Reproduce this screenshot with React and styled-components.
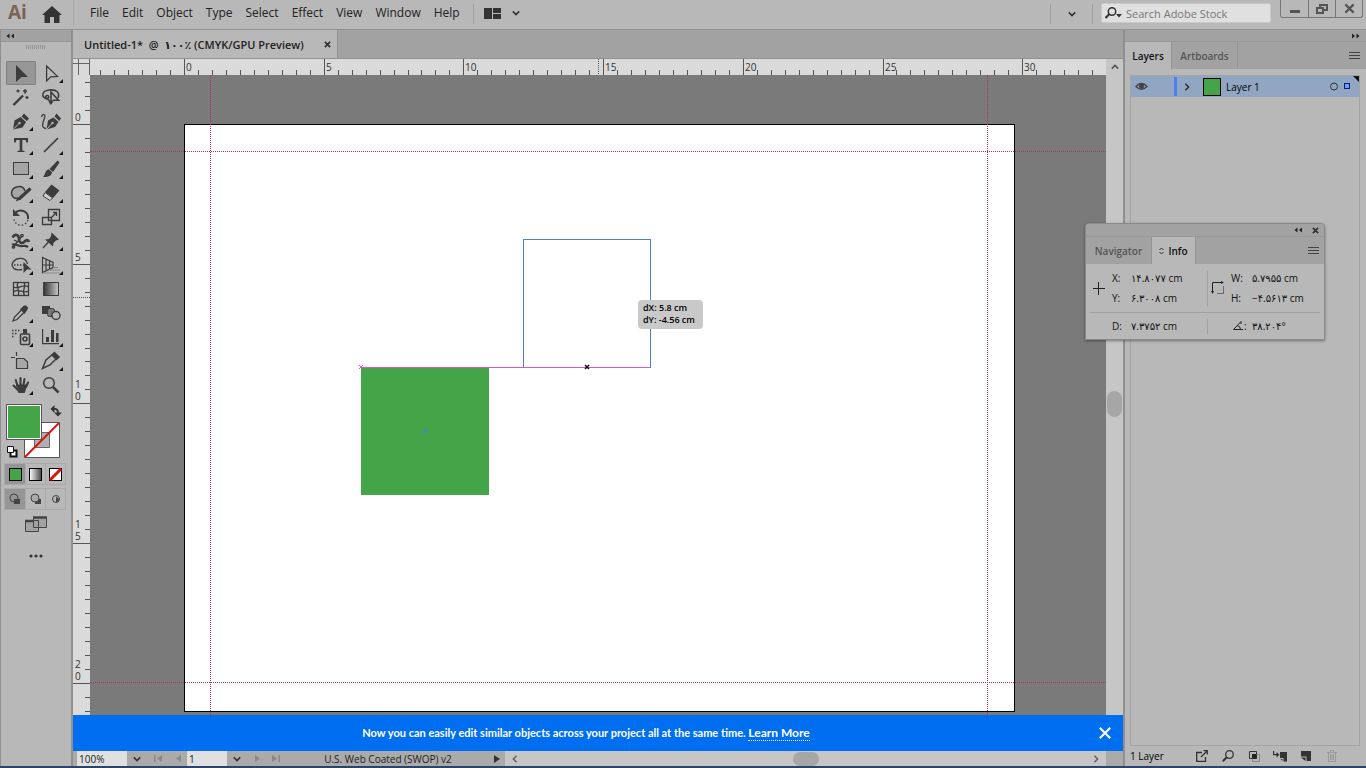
import React from "react";
import styled, { createGlobalStyle, css } from "styled-components";

const GlobalStyle = createGlobalStyle`
  * {
    box-sizing: border-box;
  }

  body {
    margin: 0;
    background: #b8b8b8;
    color: #222;
    font-family: "Open Sans", "DejaVu Sans", sans-serif;
    font-size: 12px;
    overflow: hidden;
  }

  button, input, select {
    font: inherit;
    color: inherit;
    border: 0;
    border-radius: 0;
    margin: 0;
    padding: 0;
    background: none;
  }

  svg {
    display: block;
    flex: none;
  }
`;

const Shell = styled.div`
  display: flex;
  flex-direction: column;
  height: 100vh;
  border-bottom: 2px solid #2c4468;
`;

const TopBar = styled.header`
  display: flex;
  align-items: flex-start;
  height: 30px;
  flex: none;
  border-bottom: 1px solid #929292;
`;

const Logo = styled.h1`
  width: 36px;
  margin: 0;
  padding-left: 8px;
  font: 700 19px/25px "Open Sans", sans-serif;
  color: #7b6355;
`;

const IconButton = styled.button`
  display: flex;
  align-items: center;
  justify-content: center;
  width: ${(p) => p.$w || 20}px;
  height: ${(p) => p.$h || 20}px;
  flex: none;
  color: ${(p) => p.$color || "#333"};
`;

const Divider = styled.span`
  width: 1px;
  height: 20px;
  margin-top: 4px;
  background: #a0a0a0;
`;

const Menu = styled.nav`
  display: flex;
  gap: 13px;
  padding: 0 13px 0 16px;
  margin-left: 5px;
  border-left: 1px solid #a9a9a9;
`;

const MenuItem = styled.button`
  font-size: 12px;
  line-height: 26px;
`;

const Spacer = styled.div`
  flex: ${(p) => p.$grow || 1};
`;

const Search = styled.label`
  display: flex;
  align-items: center;
  width: 170px;
  height: 20px;
  margin: 3px 9px 0 8px;
  padding-left: 3px;
  background: #e0e0e0;
  border: 1px solid #c8c8c8;
  border-radius: 2px;

  input {
    flex: 1;
    min-width: 0;
    padding-left: 4px;
    font-size: 11px;
    outline: none;
  }

  input::placeholder {
    color: #777;
    opacity: 1;
  }
`;

const WindowButtons = styled.div`
  display: flex;
  height: 18px;
  border: 1px solid #777;
  border-top: 0;
  border-radius: 0 0 3px 3px;
  margin-right: 3px;

  button + button {
    border-left: 1px solid #777;
  }
`;

const Workspace = styled.div`
  display: flex;
  flex: 1;
  min-height: 0;
`;

const DockHeader = styled.div`
  display: flex;
  align-items: center;
  justify-content: ${(p) => (p.$end ? "flex-end" : "flex-start")};
  height: 12px;
  flex: none;
  padding: 0 6px 0 5px;
  background: #a2a2a2;
  border-bottom: 1px solid #989898;
`;

const Toolbar = styled.aside`
  display: flex;
  flex-direction: column;
  width: 73px;
  flex: none;
  border-right: 2px solid #8f8f8f;
  border-left: 1px solid #8f8f8f;
`;

const Gripper = styled.div`
  width: 20px;
  height: 4px;
  margin: 3px 0 12px 25px;
  background: repeating-linear-gradient(90deg, #959595 0 1px, transparent 1px 2px);
`;

const ToolGrid = styled.div`
  display: grid;
  grid-template-columns: 30px 30px;
  grid-auto-rows: 24px;
  padding-left: 5px;
`;

const ToolButton = styled.button`
  display: block;
  color: #3c3c3c;
  ${(p) =>
    p.$active &&
    css`
      background: #969696;
      border-radius: 2px;
      box-shadow: inset 0 0 0 1px #808080;
    `}
`;

const SwatchArea = styled.div`
  padding: 7px 0 0 3px;
`;

const ModeRow = styled.div`
  display: flex;
  width: 60px;
  height: 20px;
  margin: ${(p) => p.$top}px 0 0 4px;
  box-shadow: 0 0 0 1px #a9a9a9;
`;

const ModeButton = styled.button`
  display: flex;
  align-items: center;
  justify-content: center;
  width: 20px;
  background: ${(p) => (p.$active ? "#969696" : "transparent")};
  color: #444;

  & + & {
    border-left: 1px solid #a9a9a9;
  }
`;

const Document = styled.main`
  display: flex;
  flex-direction: column;
  flex: 1;
  min-width: 0;
`;

const TabStrip = styled.div`
  display: flex;
  height: 29px;
  flex: none;
  background: #a2a2a2;
  border-bottom: 1px solid #929292;
`;

const DocumentTab = styled.div`
  display: flex;
  align-items: center;
  justify-content: space-between;
  width: 265px;
  padding: 0 4px 0 11px;
  background: #b8b8b8;
  border-right: 1px solid #929292;
  font-size: 11px;
  font-weight: 600;
  white-space: pre;
`;

const Stage = styled.div`
  display: grid;
  grid-template-columns: 17px minmax(0, 1fr) 17px;
  grid-template-rows: 16px minmax(0, 1fr);
  flex: 1;
  min-height: 0;
`;

const RulerBox = styled.div`
  overflow: hidden;
  background: #dadada;

  text {
    font-size: 10px;
    fill: #333;
  }
`;

const Canvas = styled.div`
  position: relative;
  overflow: hidden;
  background: #7a7a7a;
`;

const Artboard = styled.div`
  position: absolute;
  left: 94px;
  top: 49px;
  width: 831px;
  height: 588px;
  background: #fff;
  border: 1px solid #000;
`;

const Guide = styled.div`
  position: absolute;
  ${(p) =>
    p.$vertical
      ? css`
          left: ${p.$at}px;
          top: 0;
          bottom: 0;
          border-left: 1px dotted #b02c6c;
        `
      : css`
          top: ${p.$at}px;
          left: 0;
          right: 0;
          border-top: 1px dotted #b02c6c;
        `}
`;

const GreenSquare = styled.div`
  position: absolute;
  left: 271px;
  top: 292px;
  width: 128px;
  height: 128px;
  background: #43a547;
`;

const DragOutline = styled.div`
  position: absolute;
  left: 433px;
  top: 164px;
  width: 128px;
  height: 129px;
  border: 1px solid #4d80c4;
`;

const SmartGuide = styled.div`
  position: absolute;
  left: 271px;
  top: 292px;
  width: 289px;
  height: 1px;
  background: #d858cc;
`;

const Marker = styled.svg`
  position: absolute;
  left: ${(p) => p.$x - 3}px;
  top: ${(p) => p.$y - 3}px;
`;

const Measure = styled.output`
  position: absolute;
  left: 548px;
  top: 225px;
  width: 65px;
  height: 29px;
  padding: 2px 5px;
  background: #c9c9c9;
  border-radius: 4px;
  color: #000;
  font: 600 9px/12px "Open Sans", sans-serif;
  white-space: pre;
`;

const VScroll = styled.div`
  grid-column: 3;
  grid-row: 1 / 3;
  display: flex;
  flex-direction: column;
  align-items: center;
  background: #c6c6c6;
`;

const Thumb = styled.div`
  width: ${(p) => p.$w}px;
  height: ${(p) => p.$h}px;
  background: #a6a6a6;
  border-radius: 8px;
  flex: none;
`;

const Banner = styled.div`
  display: flex;
  align-items: center;
  height: 36px;
  flex: none;
  padding-right: 10px;
  background: #006ef0;
  color: #fff;
  font: 700 11px/16px Lato, "Open Sans", sans-serif;

  p {
    flex: 1;
    margin: 0;
    padding-left: 2px;
    text-align: center;
  }

  a {
    color: #fff;
    font-size: 12px;
    text-decoration: none;
    border-bottom: 1px dotted #fff;
  }
`;

const StatusBar = styled.div`
  display: flex;
  align-items: stretch;
  height: 15px;
  flex: none;
  padding-left: 4px;
  background: #aaa;
  font-size: 10px;
  line-height: 17px;
`;

const StatusInput = styled.input`
  width: ${(p) => p.$w}px;
  padding: 2px 0 0 2px;
  background: #e0e0e0;
`;

const Profile = styled.span`
  flex: none;
  width: 206px;
  padding-left: 4px;
  text-align: center;
`;

const HScroll = styled.div`
  display: flex;
  flex: 1;
  align-items: center;
  justify-content: space-between;
  background: #c6c6c6;
`;

const Corner = styled.div`
  width: 17px;
`;

const Dock = styled.aside`
  display: flex;
  flex-direction: column;
  width: 243px;
  flex: none;
  border-left: 2px solid #8f8f8f;
`;

const PanelTabs = styled.div`
  display: flex;
  align-items: center;
  height: 27px;
  flex: none;
  background: #a2a2a2;
`;

const PanelTab = styled.button`
  display: flex;
  align-items: center;
  justify-content: center;
  gap: 4px;
  width: ${(p) => p.$w}px;
  height: 27px;
  font-size: 10px;
  font-weight: 600;
  color: ${(p) => (p.$active ? "#111" : "#555")};
  background: ${(p) => (p.$active ? "#b8b8b8" : "transparent")};
  border-right: 1px solid #949494;
`;

const LayerList = styled.div`
  flex: 1;
  margin: 6px 6px 0 5px;
  border: 1px solid #a4a4a4;
`;

const LayerRow = styled.div`
  display: flex;
  align-items: center;
  height: 21px;
  background: #90a6c3;
  font-size: 10px;
  color: #000;
`;

const LayerStripe = styled.span`
  width: 3px;
  height: 19px;
  margin-left: 23px;
  background: #4c7ff0;
`;

const LayerThumb = styled.span`
  width: 18px;
  height: 18px;
  margin: 0 5px 0 6px;
  background: #43a547;
  border: 1px solid #000;
`;

const LayerFooter = styled.footer`
  display: flex;
  align-items: center;
  height: 20px;
  flex: none;
  padding: 0 24px 0 5px;
  gap: 6px;
  font-size: 10px;
  color: #000;

  span {
    flex: 1;
  }
`;

const InfoWindow = styled.section`
  position: absolute;
  left: calc(100vw - 281px);
  top: 223px;
  width: 240px;
  background: #b8b8b8;
  border: 1px solid #8a8a8a;
  border-radius: 4px 4px 0 0;
  box-shadow: 0 1px 3px rgba(0, 0, 0, 0.4);
  overflow: hidden;
`;

const InfoHeader = styled.div`
  display: flex;
  align-items: center;
  justify-content: flex-end;
  gap: 8px;
  height: 13px;
  padding-right: 4px;
  background: #a2a2a2;
  border-bottom: 1px solid #989898;
`;

const InfoRow = styled.div`
  display: grid;
  grid-template-columns: 26px 96px 23px 88px;
  align-items: center;
  height: ${(p) => p.$h}px;

  & + & {
    margin: 0 4px;
    grid-template-columns: 22px 96px 23px 84px;
    border-top: 1px solid #a0a0a0;
  }
`;

const Readings = styled.dl`
  display: grid;
  grid-template-columns: ${(p) => (p.$ruled ? 19 : 21)}px auto;
  row-gap: 5px;
  margin: 0;
  font-size: 10px;
  line-height: 15px;
  color: #111;
  white-space: nowrap;
  ${(p) => p.$ruled && "border-right: 1px solid #a0a0a0;"}

  dt,
  dd {
    margin: 0;
  }

  dt {
    display: flex;
    align-items: center;
  }
`;

const InfoIcon = styled.div`
  display: flex;
  justify-content: center;
`;

const Chevron = ({ dir = "down", size = 8 }) => {
  const turn = { down: 0, left: 90, up: 180, right: 270 }[dir];
  return (
    <svg width={size} height={size} viewBox="0 0 8 8" fill="none" stroke="currentColor" strokeWidth="1.6">
      <path d="M.8 2.4 4 5.6 7.2 2.4" transform={`rotate(${turn} 4 4)`} />
    </svg>
  );
};

const DoubleArrow = ({ right }) => (
  <svg width="8" height="6" viewBox="0 0 8 6" fill="#222">
    <path d={right ? "M0 .5 3 3 0 5.5ZM4.500.5 7.500 3 4.500 5.5Z" : "M3.500.5.5 3 3.500 5.5ZM8 .5 5 3 8 5.5Z"} />
  </svg>
);

const Cross = ({ size = 7, width = 2 }) => (
  <svg width={size} height={size} viewBox="0 0 8 8" stroke="currentColor" strokeWidth={width}>
    <path d="M1 1 7 7M7 1 1 7" />
  </svg>
);

const Burger = () => (
  <svg width="11" height="8" viewBox="0 0 11 8" stroke="#444" shapeRendering="crispEdges">
    <path d="M0 .5H11M0 3.5H11M0 6.5H11" />
  </svg>
);

const line = { fill: "none", stroke: "currentColor", strokeWidth: 1.3 };

// every glyph is drawn on a 30x24 cell
const tools = [
  ["Selection", <path d="M10 4 22 16 15.5 16 10 21Z" fill="currentColor" />],
  ["Direct Selection", <path d="M10.6 5 21.5 15.4 14.8 15.8 10.6 20Z" {...line} />, true],
  [
    "Magic Wand",
    <g {...line}>
      <path d="M7.5 20 17 10.5" strokeWidth="2.4" />
      <path d="M19 4v4M17 6h4M12 4.500v3M10.500 6h3M21 11v3M19.500 12.500h3M18.500 8.500 20 7" />
    </g>,
  ],
  [
    "Lasso",
    <g {...line} strokeWidth="1.6">
      <path d="M11.500 13C5 14 5 6 13 5c8-1 11 3 9 8" />
      <path d="M11.500 13c2 .5 1.500-3-.5-2.500s-1.500 4 1 4 0 4 4 4" />
      <path d="M15 7V18L17.500 15.200H22.500Z" fill="#b8b8b8" />
    </g>,
  ],
  [
    "Pen",
    <g>
      <path d="M7 20.500 8.500 11.500 14.500 8 20 13 16.500 18.500Z M15.500 7.500 18 4.500 23 9.500 20.800 12Z" fill="currentColor" />
      <path d="M7 20.500 13 14.500" stroke="#b8b8b8" />
      <circle cx="13.500" cy="14" r="1.200" fill="#b8b8b8" />
    </g>,
    true,
  ],
  [
    "Curvature",
    <g>
      <path d="M10.500 20.500 12 11.500 17.500 8.500 22.500 13 19 18Z M18.500 7.500 20.500 4.500 25 9.500 23.300 12Z" fill="currentColor" />
      <path d="M5.500 8c1-4 4.500-3 3 1s-4 10 1.500 10.500" {...line} />
      <path d="M10.500 20.500 16 14.500" stroke="#b8b8b8" />
      <circle cx="16.500" cy="14" r="1.200" fill="#b8b8b8" />
    </g>,
  ],
  ["Type", <path d="M8 5H22V9.500H20.500L19.500 7H16.300V17.500L18.500 18V19H11.500V18L13.700 17.500V7H10.500L9.500 9.500H8Z" fill="currentColor" />, true],
  ["Line Segment", <path d="M8 19 22 5" {...line} strokeWidth="1.7" />, true],
  ["Rectangle", <rect x="7.500" y="5.500" width="15" height="12" fill="#a5a5a5" stroke="currentColor" />, true],
  [
    "Paintbrush",
    <g fill="currentColor">
      <path d="M21.500 3.500 23.500 5.500 17 15 13.500 12Z" />
      <path d="M12.800 12.300 16 15.300C15.500 20 11 20 7 20 9.500 18 9 13 12.800 12.300Z" />
    </g>,
    true,
  ],
  [
    "Shaper",
    <g {...line}>
      <path d="M19 10C17 3 6 5 5.500 12c0 4 3 6 7 5.500" fill="#a5a5a5" strokeWidth="1.5" />
      <path d="M13 18 24.500 7.500" strokeWidth="3.200" />
      <path d="M10 20.500 11.500 16 14.500 18.500Z" fill="currentColor" stroke="none" />
    </g>,
    true,
  ],
  [
    "Eraser",
    <g>
      <path d="M15.500 3.500 23.500 9.500 17 17 9 11Z" fill="currentColor" />
      <path d="M9 11.500 16.500 17 14 19.500 7 15Z" fill="#d0d0d0" stroke="currentColor" />
    </g>,
    true,
  ],
  [
    "Rotate",
    <g {...line}>
      <path d="M9 8C14 3 23 6 22 14" strokeWidth="2" />
      <path d="M22 15C20 22 9 22 8 14" strokeDasharray="1.500 2" />
      <path d="M7 4V11H14Z" fill="currentColor" stroke="none" />
    </g>,
    true,
  ],
  [
    "Scale",
    <g {...line}>
      <path d="M12.500 4.500H23.500V15.500H12.500ZM6.500 12.500H15.500V19.500H6.500Z" />
      <path d="M16 12 20.500 7.500M17 7.500H20.500V11" />
    </g>,
    true,
  ],
  [
    "Width",
    <g {...line}>
      <path d="M6.500 8.500C9 4 13 6 13 10s3 5 5 3 4-3 5 0" strokeWidth="2.600" />
      <path d="M6 15.500c3-1 5 1 8 1.500s5-1 8 1" strokeWidth="2.200" />
      <path d="M7 18.500 16 7M8 11 12 13" />
      <circle cx="7.500" cy="18" r="1.200" />
      <circle cx="16" cy="6.500" r="1.200" />
    </g>,
    true,
  ],
  [
    "Puppet Warp",
    <g fill="currentColor">
      <path d="M15.500 3.500 23 10.500 20 11.500 17.500 14 17 17.500 9 10.500 13 10 15 7.500Z" />
      <path d="M12.500 13 7 19" {...line} />
    </g>,
    true,
  ],
  [
    "Shape Builder",
    <g>
      <path d="M16 16.500C8 18.500 4 13 7.500 8.500S20 4 21.500 11" {...line} />
      <path d="M8 12H18" {...line} strokeDasharray="1.500 1.500" />
      <path d="M17.500 9 25.500 16.500H21L17.500 20Z" fill="currentColor" />
    </g>,
    true,
  ],
  [
    "Perspective Grid",
    <g {...line} strokeWidth="1.200">
      <path d="M6.500 4.500V19.500L17 14.500V9.500ZM10 6V18M13.500 8V16M6.500 12H17" />
      <path d="M17 14.500H22M13 17H24M7 20H24" stroke="#888" />
    </g>,
    true,
  ],
  [
    "Mesh",
    <g {...line}>
      <rect x="7.500" y="5.500" width="15" height="13" />
      <path d="M7.500 10C12 13 17 6 22.500 10M7.500 15C12 11 17 17 22.500 14M12 5.500C9 10 15 14 12 18.500M18 5.500C21 10 15 13 18.500 18.500" />
    </g>,
  ],
  [
    "Gradient",
    <g>
      <defs>
        <linearGradient id="toolGradient">
          <stop offset="0" stopColor="#333" />
          <stop offset="1" stopColor="#c8c8c8" />
        </linearGradient>
      </defs>
      <rect x="7.500" y="5.500" width="15" height="13" fill="url(#toolGradient)" stroke="currentColor" />
    </g>,
  ],
  [
    "Eyedropper",
    <g>
      <path d="M7 20 8.500 16 16 8.500 18.500 11 11 18.500Z" {...line} />
      <path d="M14 8 16 6.500C19 2 24 6 21 9.500L19.500 11.500 18.500 13Z" fill="currentColor" />
    </g>,
    true,
  ],
  [
    "Blend",
    <g stroke="currentColor">
      <rect x="6.500" y="5.500" width="7" height="7" fill="#3c3c3c" />
      <rect x="11.500" y="7.500" width="7" height="8" rx="2" fill="#777" />
      <circle cx="20" cy="14.500" r="4" fill="#b8b8b8" strokeWidth="1.400" />
    </g>,
  ],
  [
    "Symbol Sprayer",
    <g {...line}>
      <path d="M6 5.500H14M6 8.500H12M6 11.500H9" strokeDasharray="1.500 1.500" strokeWidth="1.600" />
      <rect x="14.500" y="9" width="9" height="10.500" rx="1" strokeWidth="1.600" />
      <circle cx="19" cy="14" r="2" strokeWidth="1.600" />
      <path d="M17 4H21V8.500H17Z" fill="currentColor" stroke="none" />
    </g>,
    true,
  ],
  [
    "Column Graph",
    <g fill="currentColor">
      <path d="M6 4H7.200V18H23V19.200H6ZM10 12H13V17H10ZM15 5H18V17H15ZM20 8H22.500V17H20Z" />
    </g>,
    true,
  ],
  [
    "Artboard",
    <g {...line} strokeWidth="1.200">
      <path d="M10.500 9.500H18L21.500 13V19.500H10.500Z" fill="#a8a8a8" />
      <path d="M5 8.500H9M10.500 3V7" />
    </g>,
  ],
  [
    "Slice",
    <g {...line} strokeWidth="1.500">
      <path d="M6.500 19.500 10 11 16.500 5.500 20.500 9.500 14 16Z" />
      <path d="M16 6 18.500 3.500 23 8 20.500 10.500Z" fill="currentColor" />
    </g>,
    true,
  ],
  [
    "Hand",
    <g fill="none" stroke="currentColor" strokeWidth="2.100" strokeLinecap="round">
      <path d="M11.500 13 9.800 7M14.500 12V5M17.500 12 18.500 6M20 14 22 9.500M12 17 7.500 12.500" />
      <path d="M11 12H20.500L18.500 19.500H13Z" fill="currentColor" strokeWidth="1" />
    </g>,
    true,
  ],
  [
    "Zoom",
    <g {...line}>
      <circle cx="13" cy="10" r="5.300" strokeWidth="1.500" />
      <path d="M17 14 22.500 19.500" strokeWidth="2.500" />
    </g>,
  ],
];

const UNIT = 27.94;
const halfUnits = (from, to) => Array.from({ length: to - from }, (_, i) => i + from);

const TopRuler = () => (
  <RulerBox>
    <svg width="1016" height="16" stroke="#555" shapeRendering="crispEdges">
      {halfUnits(-6, 67).map((n) => {
        const x = Math.round(94 + (n * UNIT) / 2) + 0.5;
        return <path key={n} d={`M${x} ${n % 10 === 0 ? 0 : 11}V16`} />;
      })}
      <path d="M508.500 0V16" strokeDasharray="1 1" />
      {[0, 5, 10, 15, 20, 25, 30].map((n) => (
        <text key={n} x={96 + Math.round(n * UNIT)} y="12" stroke="none">
          {n}
        </text>
      ))}
    </svg>
  </RulerBox>
);

const SideRuler = () => (
  <RulerBox>
    <svg width="17" height="640" stroke="#555" shapeRendering="crispEdges">
      {halfUnits(-3, 43).map((n) => {
        const y = Math.round(49 + (n * UNIT) / 2) + 0.5;
        return <path key={n} d={`M${n % 10 === 0 ? 0 : 12} ${y}H17`} />;
      })}
      <path d="M0 222.500H17" strokeDasharray="1 1" />
      {[0, 5, 10, 15, 20].map((n) =>
        String(n)
          .split("")
          .reverse()
          .map((digit, i) => (
            <text key={`${n}-${i}`} x="2" y={46 + Math.round(n * UNIT) - i * 12} stroke="none">
              {digit}
            </text>
          ))
      )}
    </svg>
  </RulerBox>
);

const Header = () => (
  <TopBar>
    <Logo>Ai</Logo>
    <IconButton $w={32} $h={28} aria-label="Home">
      <svg width="20" height="17" viewBox="0 0 20 17" fill="#333">
        <path d="M10 0 20 9H17.500V17H12V11H8V17H2.500V9H0Z" />
      </svg>
    </IconButton>
    <Menu>
      {["File", "Edit", "Object", "Type", "Select", "Effect", "View", "Window", "Help"].map((name) => (
        <MenuItem key={name}>{name}</MenuItem>
      ))}
    </Menu>
    <Divider />
    <IconButton $w={38} $h={26} aria-label="Arrange documents">
      <svg width="17" height="11" viewBox="0 0 17 11" fill="#333">
        <path d="M0 0H8V11H0ZM9 0H17V5H9ZM9 6H17V11H9Z" />
      </svg>
    </IconButton>
    <IconButton $w={8} $h={26} aria-label="Arrange options">
      <Chevron />
    </IconButton>
    <Spacer />
    <Divider />
    <IconButton $w={41} $h={28} aria-label="Workspace">
      <Chevron />
    </IconButton>
    <Divider />
    <Search>
      <svg width="17" height="12" viewBox="0 0 17 12" fill="none" stroke="#333" strokeWidth="1.500">
        <circle cx="7" cy="4.500" r="3.700" />
        <path d="M4.500 7 .5 11" strokeWidth="2" />
        <path d="M11 7H17L14 10.500Z" fill="#333" stroke="none" />
      </svg>
      <input type="text" placeholder="Search Adobe Stock" aria-label="Search Adobe Stock" />
    </Search>
    <WindowButtons>
      <IconButton $w={27} $h={17} aria-label="Minimize">
        <svg width="10" height="10" fill="#555">
          <path d="M0 6H10V9H0Z" />
        </svg>
      </IconButton>
      <IconButton $w={27} $h={17} aria-label="Restore">
        <svg width="12" height="10" fill="none" stroke="#555" strokeWidth="2">
          <path d="M4 3V1H11V6H8M1 4H7V9H1Z" />
        </svg>
      </IconButton>
      <IconButton $w={27} $h={17} $color="#555" aria-label="Close">
        <Cross size={11} width={1.6} />
      </IconButton>
    </WindowButtons>
  </TopBar>
);

const ToolPanel = () => (
  <Toolbar>
    <DockHeader>
      <DoubleArrow />
    </DockHeader>
    <Gripper />
    <ToolGrid>
      {tools.map(([name, glyph, more], i) => (
        <ToolButton key={name} $active={i === 0} aria-label={name}>
          <svg width="30" height="24">
            {glyph}
            {more && <path d="M27 18V22H23Z" fill="#111" />}
          </svg>
        </ToolButton>
      ))}
    </ToolGrid>
    <SwatchArea>
      <svg width="60" height="56" role="img" aria-label="Fill and stroke">
        <path d="M20.500 18.500H55.500V53.500H20.500Z" fill="#fff" stroke="#555" />
        <path d="M30.500 28.500H45.500V43.500H30.500Z" fill="#b0b0b0" stroke="#666" />
        <path d="M21 53 55 19" stroke="#e01010" strokeWidth="2" />
        <path d="M2.500.5H37.500V35.500H2.500Z" fill="#43a547" stroke="#555" />
        <path d="M3.500 1.500H36.500V34.500H3.500Z" fill="none" stroke="#fff" />
        <path d="M50 5Q54 4.500 54 9" fill="none" stroke="#333" strokeWidth="1.800" />
        <path d="M50.500 1V9L46.500 5ZM50 8.500H58L54 12.500Z" fill="#333" />
        <path d="M6.500 46.500H12.500V52.500H6.500Z" fill="#fff" stroke="#111" strokeWidth="2" />
        <path d="M3.500 42.500H9.500V48.500H3.500Z" fill="#fff" stroke="#111" />
      </svg>
    </SwatchArea>
    <ModeRow $top={4}>
      <ModeButton $active aria-label="Color">
        <svg width="13" height="13">
          <rect x=".5" y=".5" width="12" height="12" fill="#43a547" stroke="#000" />
        </svg>
      </ModeButton>
      <ModeButton aria-label="Gradient fill">
        <svg width="13" height="13">
          <defs>
            <linearGradient id="fillGradient">
              <stop offset="0" stopColor="#fff" />
              <stop offset="1" stopColor="#444" />
            </linearGradient>
          </defs>
          <rect x=".5" y=".5" width="12" height="12" fill="url(#fillGradient)" stroke="#000" />
        </svg>
      </ModeButton>
      <ModeButton aria-label="None">
        <svg width="13" height="13">
          <rect x=".5" y=".5" width="12" height="12" fill="#fff" stroke="#000" />
          <path d="M1 12 12 1" stroke="#e01010" strokeWidth="3" />
        </svg>
      </ModeButton>
    </ModeRow>
    <ModeRow $top={5}>
      <ModeButton $active aria-label="Draw normal">
        <svg width="12" height="12">
          <circle cx="5" cy="5" r="4" fill="none" stroke="currentColor" />
          <path d="M5 6H11V11H5Z" fill="currentColor" />
        </svg>
      </ModeButton>
      <ModeButton aria-label="Draw behind">
        <svg width="12" height="12">
          <path d="M5 6H11V11H5Z" fill="currentColor" />
          <circle cx="5" cy="5" r="4" fill="#aaa" stroke="currentColor" />
        </svg>
      </ModeButton>
      <ModeButton aria-label="Draw inside">
        <svg width="10" height="10">
          <circle cx="5" cy="5" r="3.500" fill="none" stroke="currentColor" />
          <path d="M5 5V2.500L8 5A3 3 0 0 1 5 8Z" fill="currentColor" />
        </svg>
      </ModeButton>
    </ModeRow>
    <IconButton $w={70} $h={30} aria-label="Change screen mode">
      <svg width="22" height="16" fill="#a2a2a2" stroke="#444">
        <path d="M.5 4.500H13.500V15.500H.5ZM8.500 1.500H21.500V11.500H8.500Z" />
        <path d="M0 5H8M8 1.500H22" strokeWidth="2.400" />
      </svg>
    </IconButton>
    <IconButton $w={70} $h={34} aria-label="Edit toolbar">
      <svg width="14" height="4" fill="#333">
        <circle cx="2" cy="2" r="1.600" />
        <circle cx="7" cy="2" r="1.600" />
        <circle cx="12" cy="2" r="1.600" />
      </svg>
    </IconButton>
  </Toolbar>
);

const DocumentView = () => (
  <Document>
    <TabStrip>
      <DocumentTab>
        <span>Untitled-1*  @  ۱۰۰٪ (CMYK/GPU Preview)</span>
        <IconButton $w={12} aria-label="Close document">
          <Cross />
        </IconButton>
      </DocumentTab>
    </TabStrip>
    <Stage>
      <RulerBox>
        <svg width="17" height="16" stroke="#666" shapeRendering="crispEdges">
          <path d="M0 4.500H17M5.500 0V16M16.500 0V16" />
        </svg>
      </RulerBox>
      <TopRuler />
      <VScroll>
        <IconButton $h={16} $color="#555" aria-label="Scroll up">
          <Chevron dir="up" />
        </IconButton>
        <Spacer $grow={18} />
        <Thumb $w={15} $h={26} />
        <Spacer $grow={17} />
      </VScroll>
      <SideRuler />
      <Canvas>
        <Artboard />
        <Guide $vertical $at={120} />
        <Guide $vertical $at={897} />
        <Guide $at={76} />
        <Guide $at={607} />
        <GreenSquare />
        <DragOutline />
        <SmartGuide />
        <Marker $x={271} $y={292} width="6" height="6" stroke="#e050d8">
          <path d="M1 1 5 5M5 1 1 5" />
        </Marker>
        <Marker $x={335} $y={356} width="6" height="6" stroke="#3f84e0">
          <path d="M1 1 5 5M5 1 1 5M3 1V5" />
        </Marker>
        <Marker $x={497} $y={292} width="6" height="6" stroke="#111" strokeWidth="1.500">
          <path d="M1 1 5 5M5 1 1 5" />
        </Marker>
        <Measure>{"dX: 5.8 cm\ndY: -4.56 cm"}</Measure>
      </Canvas>
    </Stage>
    <Banner>
      <p>
        Now you can easily edit similar objects across your project all at the same time. <a href="#learn">Learn More</a>
      </p>
      <IconButton $w={16} $color="#fff" aria-label="Dismiss">
        <Cross size={14} width={1.2} />
      </IconButton>
    </Banner>
    <StatusBar>
      <StatusInput $w={50} defaultValue="100%" aria-label="Zoom level" />
      <IconButton $h={15} aria-label="Zoom presets">
        <Chevron />
      </IconButton>
      <IconButton $w={22} $h={15} $color="#888" aria-label="First artboard">
        <svg width="9" height="7" fill="currentColor">
          <path d="M0 0H1.500V7H0ZM8 0V7L3 3.500Z" />
        </svg>
      </IconButton>
      <IconButton $w={18} $h={15} $color="#888" aria-label="Previous artboard">
        <svg width="5" height="7" fill="currentColor">
          <path d="M5 0V7L0 3.500Z" />
        </svg>
      </IconButton>
      <StatusInput $w={40} defaultValue="1" aria-label="Artboard number" />
      <IconButton $h={15} aria-label="Artboard list">
        <Chevron />
      </IconButton>
      <IconButton $w={20} $h={15} $color="#888" aria-label="Next artboard">
        <svg width="5" height="7" fill="currentColor">
          <path d="M0 0V7L5 3.500Z" />
        </svg>
      </IconButton>
      <IconButton $w={16} $h={15} $color="#888" aria-label="Last artboard">
        <svg width="9" height="7" fill="currentColor">
          <path d="M7.500 0H9V7H7.500ZM1 0V7L6 3.500Z" />
        </svg>
      </IconButton>
      <Profile>U.S. Web Coated (SWOP) v2</Profile>
      <IconButton $w={16} $h={15} aria-label="Status options">
        <svg width="6" height="8" fill="currentColor">
          <path d="M0 0V8L6 4Z" />
        </svg>
      </IconButton>
      <HScroll>
        <IconButton $h={15} $color="#666" aria-label="Scroll left">
          <Chevron dir="left" />
        </IconButton>
        <Thumb $w={26} $h={14} />
        <IconButton $h={15} $color="#666" aria-label="Scroll right">
          <Chevron dir="right" />
        </IconButton>
      </HScroll>
      <Corner />
    </StatusBar>
  </Document>
);

const LayersPanel = () => (
  <Dock>
    <DockHeader $end>
      <DoubleArrow right />
    </DockHeader>
    <PanelTabs>
      <PanelTab $active $w={47}>Layers</PanelTab>
      <PanelTab $w={66}>Artboards</PanelTab>
      <Spacer />
      <IconButton $w={24} aria-label="Panel menu">
        <Burger />
      </IconButton>
    </PanelTabs>
    <LayerList>
      <LayerRow>
        <IconButton aria-label="Toggle visibility">
          <svg width="13" height="9" viewBox="0 0 13 9">
            <path d="M1 4.500Q6.500-1.500 12 4.500 6.500 10 1 4.500Z" fill="none" stroke="#444" strokeWidth="1.400" />
            <circle cx="6.500" cy="4.300" r="2.500" fill="#444" />
          </svg>
        </IconButton>
        <LayerStripe />
        <IconButton aria-label="Expand layer">
          <Chevron dir="right" />
        </IconButton>
        <LayerThumb />
        <span>Layer 1</span>
        <Spacer />
        <svg width="32" height="21">
          <circle cx="7" cy="10.500" r="3.500" fill="none" stroke="#333" />
          <rect x="17.500" y="7.500" width="5" height="5" fill="#6a9cf8" stroke="#102070" />
          <path d="M26 0H32V6Z" fill="#111" />
        </svg>
      </LayerRow>
    </LayerList>
    <LayerFooter>
      <span>1 Layer</span>
      <IconButton aria-label="Collect for export">
        <svg width="12" height="12" {...line} stroke="#333">
          <path d="M6 2.500H.7V11.300H9.500V7M5 7 11 1M7.500.7H11.300V4.500" />
        </svg>
      </IconButton>
      <IconButton aria-label="Locate object">
        <svg width="12" height="12" {...line} stroke="#333">
          <circle cx="7.500" cy="4.500" r="3.800" />
          <path d="M4.800 7.200.8 11.200" strokeWidth="2" />
        </svg>
      </IconButton>
      <IconButton aria-label="Make clipping mask">
        <svg width="11" height="11" fill="none" stroke="#333">
          <path d="M.5.5H7.500V7.500H.5Z" />
          <path d="M3.500 3.500H10.500V10.500H3.500Z" stroke="#888" />
          <path d="M3 3H7.500V7.500H3Z" fill="#222" stroke="none" />
        </svg>
      </IconButton>
      <IconButton aria-label="New sublayer">
        <svg width="14" height="11" fill="#333">
          <path d="M7 1H14V10.500H10.500V7H7ZM7.500 8H9.500V10ZM0 0H1.200V3H3.500V1L6.500 3.700 3.500 6.500V4.300H0Z" />
        </svg>
      </IconButton>
      <IconButton aria-label="New layer">
        <svg width="10" height="10" fill="#333">
          <path d="M0 0H10V10H5.500V5.500H0ZM0 6.500H4.500V10Z" />
        </svg>
      </IconButton>
      <IconButton $color="#9a9a9a" aria-label="Delete layer">
        <svg width="10" height="12" fill="none" stroke="currentColor">
          <path d="M0 2.500H10M3.500 2V.5H6.500V2M1.500 2.500V11.500H8.500V2.500M3.500 4V10M5 4V10M6.500 4V10" />
        </svg>
      </IconButton>
    </LayerFooter>
  </Dock>
);

const InfoPanel = () => (
  <InfoWindow>
    <InfoHeader>
      <DoubleArrow />
      <IconButton $w={10} $h={12} aria-label="Close panel">
        <Cross />
      </IconButton>
    </InfoHeader>
    <PanelTabs>
      <PanelTab $w={66}>Navigator</PanelTab>
      <PanelTab $active $w={44}>
        <svg width="5" height="8" fill="none" stroke="#333">
          <path d="M.5 3 2.500 1 4.500 3M.5 5 2.500 7 4.500 5" />
        </svg>
        Info
      </PanelTab>
      <Spacer />
      <IconButton $w={22} aria-label="Info menu">
        <Burger />
      </IconButton>
    </PanelTabs>
    <InfoRow $h={48}>
      <InfoIcon>
        <svg width="12" height="13" stroke="#222" shapeRendering="crispEdges">
          <path d="M0 6.500H13M5.500 0V13" />
        </svg>
      </InfoIcon>
      <Readings $ruled>
        <dt>X:</dt>
        <dd>۱۴.۸۰۷۷ cm</dd>
        <dt>Y:</dt>
        <dd>۶.۳۰۰۸ cm</dd>
      </Readings>
      <InfoIcon>
        <svg width="17" height="14" fill="none" stroke="#222">
          <path d="M1.500 11V1.500H11" />
          <path d="M6.500 12.500H12.500V5" strokeDasharray="1 1" />
          <path d="M10 0 13 1.500 10 3ZM0 10 1.500 13 3 10Z" fill="#222" stroke="none" />
        </svg>
      </InfoIcon>
      <Readings>
        <dt>W:</dt>
        <dd>۵.۷۹۵۵ cm</dd>
        <dt>H:</dt>
        <dd>−۴.۵۶۱۳ cm</dd>
      </Readings>
    </InfoRow>
    <InfoRow $h={27}>
      <span />
      <Readings $ruled>
        <dt>D:</dt>
        <dd>۷.۳۷۵۲ cm</dd>
      </Readings>
      <span />
      <Readings>
        <dt>
          <svg width="13" height="10" fill="none" stroke="#222" role="img" aria-label="Angle">
            <path d="M10 .5 2.500 8.500H12M6 4.500Q9.500 5 9.500 8.500M10 .5V3" />
          </svg>
          :
        </dt>
        <dd>۳۸.۲۰۴°</dd>
      </Readings>
    </InfoRow>
  </InfoWindow>
);

export default function App() {
  return (
    <>
      <GlobalStyle />
      <Shell>
        <Header />
        <Workspace>
          <ToolPanel />
          <DocumentView />
          <LayersPanel />
        </Workspace>
      </Shell>
      <InfoPanel />
    </>
  );
}
